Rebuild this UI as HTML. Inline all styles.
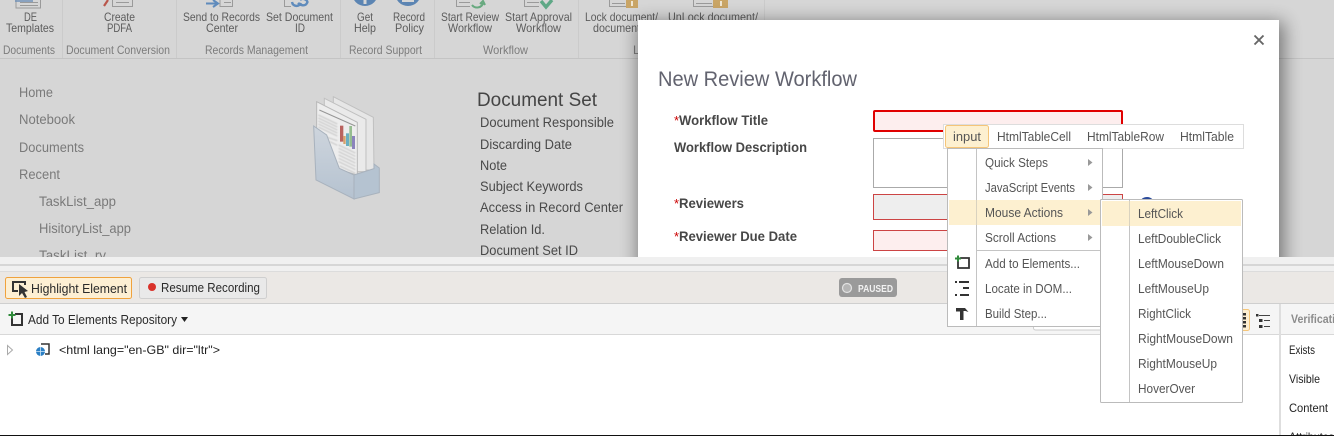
<!DOCTYPE html>
<html lang="en">
<head>
<meta charset="utf-8">
<title>New Review Workflow</title>
<style>
html,body{margin:0;padding:0;background:#fff;width:1341px;height:440px;overflow:hidden}
svg{display:block}
text{font-family:"Liberation Sans",Arial,sans-serif;white-space:pre}
.r{font-size:12px;fill:#5c5c5c}
.g{font-size:12px;fill:#7c7c7c}
.n{font-size:13.5px;fill:#7a7a7a}
.d{font-size:14px;fill:#4a4a4a}
.l{font-size:14px;font-weight:bold;fill:#474747}
.s{font-size:13px;fill:#c00}
.m{font-size:13px;fill:#555}
.b{font-size:13px;fill:#2a2a2a}
</style>
</head>
<body>
<svg width="1341" height="440" viewBox="0 0 1341 440" xmlns="http://www.w3.org/2000/svg">
<defs>
<filter id="sh" x="-20%" y="-30%" width="140%" height="160%"><feGaussianBlur stdDeviation="9"/></filter>
<filter id="bl" x="-2%" y="-2%" width="104%" height="104%"><feGaussianBlur stdDeviation="0.3"/></filter>
<filter id="bf" x="-5%" y="-5%" width="110%" height="110%"><feGaussianBlur stdDeviation="1.400"/></filter>
<linearGradient id="bx" x1="0" y1="0" x2="0" y2="1"><stop offset="0" stop-color="#ced5dd"/><stop offset="1" stop-color="#b5c2d0"/></linearGradient>
</defs>
<rect width="1341" height="440" fill="#fff"/>
<rect width="1334" height="258" fill="#d6d6d6"/>

<g filter="url(#bl)">
<!-- ribbon -->
<rect x="0" y="58" width="1334" height="1" fill="#c4c4c4"/>
<g fill="#cbcbcb">
<rect x="62" y="0" width="1" height="58"/><rect x="176" y="0" width="1" height="58"/><rect x="340" y="0" width="1" height="58"/><rect x="434" y="0" width="1" height="58"/><rect x="578" y="0" width="1" height="58"/><rect x="764" y="0" width="1" height="20"/>
</g>
<!-- ribbon icons -->
<g fill="none" stroke="#9a9a9a" stroke-width="1">
<path d="M16 -1V8H40.500V-1"/><path d="M112.500 -1V6.500H132.500V-1"/><path d="M220 -1V6.500H232.500V-1"/><path d="M284.500 -1V6.500H291"/><path d="M456.500 -1V6.500H470"/><path d="M524.500 -1V6.500H539"/><path d="M609.500 -1V6.500H626"/><path d="M693.500 -1V6.500H713"/>
<path d="M20 2.500H38M20 5.500H38M116 2.500H129M224 2.500H231M459 2.500H470M527 2.500H539M612 3.500H625M696 3.500H712"/>
</g>
<path d="M15 1H33" stroke="#6f92b8" stroke-width="1.400"/>
<path d="M104 6L108 0" stroke="#b9574c" stroke-width="2.200"/>
<path d="M206 3.500H217M213 0L218 3.500L213 7" fill="none" stroke="#5e8bbc" stroke-width="2"/>
<path d="M292 2C293 7 299 7 301 3M300 0C303 -3 309 1 307 3C305 7 300 5 298 3" fill="none" stroke="#5e8bbc" stroke-width="2.400"/>
<circle cx="365" cy="-7" r="13" fill="#5b85b3"/>
<rect x="363.500" y="-2" width="3" height="6" fill="#d6d6d6"/>
<circle cx="408" cy="-7" r="13" fill="#5b85b3"/>
<rect x="402" y="-3" width="12" height="5" fill="#d6d6d6"/>
<path d="M472 5C475 9 482 8 483 3M480 4L483 1L485 5" fill="none" stroke="#67a97f" stroke-width="2"/>
<path d="M541 1L546 7L552 0" fill="none" stroke="#5fa886" stroke-width="3.400"/>
<rect x="626" y="-2" width="12" height="10" fill="#c9a566"/><rect x="631" y="1" width="2" height="5" fill="#efe6d2"/>
<rect x="713" y="-2" width="15" height="10" fill="#c9a566"/><rect x="720" y="1" width="2" height="5" fill="#efe6d2"/>

<g class="r">
<text class="r" x="24" y="21" textLength="13" lengthAdjust="spacingAndGlyphs">DE</text>
<text class="r" x="6" y="32" textLength="48" lengthAdjust="spacingAndGlyphs">Templates</text>
<text class="r" x="104" y="21" textLength="31" lengthAdjust="spacingAndGlyphs">Create</text>
<text class="r" x="107" y="32" textLength="25" lengthAdjust="spacingAndGlyphs">PDFA</text>
<text class="r" x="183" y="21" textLength="77" lengthAdjust="spacingAndGlyphs">Send to Records</text>
<text class="r" x="206" y="32" textLength="32" lengthAdjust="spacingAndGlyphs">Center</text>
<text class="r" x="266" y="21" textLength="67" lengthAdjust="spacingAndGlyphs">Set Document</text>
<text class="r" x="295" y="32" textLength="10" lengthAdjust="spacingAndGlyphs">ID</text>
<text class="r" x="357" y="21" textLength="16" lengthAdjust="spacingAndGlyphs">Get</text>
<text class="r" x="354" y="32" textLength="22" lengthAdjust="spacingAndGlyphs">Help</text>
<text class="r" x="393" y="21" textLength="32" lengthAdjust="spacingAndGlyphs">Record</text>
<text class="r" x="395" y="32" textLength="29" lengthAdjust="spacingAndGlyphs">Policy</text>
<text class="r" x="441" y="21" textLength="58" lengthAdjust="spacingAndGlyphs">Start Review</text>
<text class="r" x="448" y="32" textLength="44" lengthAdjust="spacingAndGlyphs">Workflow</text>
<text class="r" x="505" y="21" textLength="67" lengthAdjust="spacingAndGlyphs">Start Approval</text>
<text class="r" x="516" y="32" textLength="45" lengthAdjust="spacingAndGlyphs">Workflow</text>
<text class="r" x="585" y="21" textLength="73" lengthAdjust="spacingAndGlyphs">Lock document/</text>
<text class="r" x="593" y="32" textLength="47" lengthAdjust="spacingAndGlyphs">document</text>
<text class="r" x="668" y="21" textLength="90" lengthAdjust="spacingAndGlyphs">UnLock document/</text>
<text class="g" x="3" y="54" textLength="52" lengthAdjust="spacingAndGlyphs">Documents</text>
<text class="g" x="66" y="54" textLength="104" lengthAdjust="spacingAndGlyphs">Document Conversion</text>
<text class="g" x="205" y="54" textLength="103" lengthAdjust="spacingAndGlyphs">Records Management</text>
<text class="g" x="349" y="54" textLength="73" lengthAdjust="spacingAndGlyphs">Record Support</text>
<text class="g" x="483" y="54" textLength="45" lengthAdjust="spacingAndGlyphs">Workflow</text>
<text class="g" x="633" y="54">L</text>
</g>

<!-- left nav -->
<text class="n" x="19" y="97" textLength="34" lengthAdjust="spacingAndGlyphs">Home</text>
<text class="n" x="19" y="124" textLength="56" lengthAdjust="spacingAndGlyphs">Notebook</text>
<text class="n" x="19" y="152" textLength="65" lengthAdjust="spacingAndGlyphs">Documents</text>
<text class="n" x="19" y="179" textLength="41" lengthAdjust="spacingAndGlyphs">Recent</text>
<text class="n" x="39" y="206" textLength="77" lengthAdjust="spacingAndGlyphs">TaskList_app</text>
<text class="n" x="39" y="233" textLength="92" lengthAdjust="spacingAndGlyphs">HisitoryList_app</text>
<text class="n" x="39" y="260" textLength="67" lengthAdjust="spacingAndGlyphs">TaskList_ry</text>

<!-- folder icon -->
<g transform="translate(280,80) scale(.3333)">
<polygon points="160,50 280,112 282,270 160,270" fill="#e6e6e6" stroke="#c0c0c0" stroke-width="3"/>
<polygon points="133,55 258,118 258,275 133,275" fill="#eaeaea" stroke="#c0c0c0" stroke-width="3"/>
<polygon points="110,65 232,127 232,285 165,265 110,200" fill="#ededed" stroke="#b8b8b8" stroke-width="3"/>
<path d="M118 90L226 138" stroke="#969696" stroke-width="3"/>
<g filter="url(#bf)" stroke="#cfcfcf" stroke-width="4" fill="none">
<path d="M115 105L172 132M115 114L172 141M115 123L172 150M115 132L172 159M115 141L172 168M135 170L172 182M150 185L172 196"/>
<path d="M176 195L226 219M176 205L226 229M176 215L226 239M176 225L226 249M176 235L226 259M176 245L226 269M180 258L226 280"/>
</g>
<rect x="180" y="137" width="10" height="48" fill="#b9625f"/>
<rect x="190" y="168" width="7" height="24" fill="#d6a26a"/>
<rect x="198" y="160" width="9" height="38" fill="#6aaec0"/>
<rect x="208" y="138" width="8" height="62" fill="#95bd90"/>
<rect x="216" y="168" width="9" height="39" fill="#8b84bd"/>
<polygon points="101,138 140,165 178,265 222,285 222,357 108,300" fill="url(#bx)" stroke="#a8b2bd" stroke-width="3"/>
<polygon points="222,285 282,266 282,252 298,264 298,338 222,357" fill="#b5c3d1" stroke="#a8b2bd" stroke-width="3"/>
</g>

<!-- document set -->
<text x="477" y="106" font-size="19" fill="#444" textLength="120" lengthAdjust="spacingAndGlyphs">Document Set</text>
<text class="d" x="480" y="127" textLength="134" lengthAdjust="spacingAndGlyphs">Document Responsible</text>
<text class="d" x="480" y="149" textLength="92" lengthAdjust="spacingAndGlyphs">Discarding Date</text>
<text class="d" x="480" y="170" textLength="27" lengthAdjust="spacingAndGlyphs">Note</text>
<text class="d" x="480" y="191" textLength="103" lengthAdjust="spacingAndGlyphs">Subject Keywords</text>
<text class="d" x="480" y="212" textLength="143" lengthAdjust="spacingAndGlyphs">Access in Record Center</text>
<text class="d" x="480" y="234" textLength="65" lengthAdjust="spacingAndGlyphs">Relation Id.</text>
<text class="d" x="480" y="255" textLength="98" lengthAdjust="spacingAndGlyphs">Document Set ID</text>
</g>

<!-- dialog -->
<rect x="638" y="22" width="646" height="270" fill="#000" opacity=".45" filter="url(#sh)"/>
<rect x="638" y="20" width="641" height="240" fill="#fff"/>
<path d="M1254.500 35.500L1263.500 44.500M1263.500 35.500L1254.500 44.500" stroke="#666" stroke-width="1.900" fill="none"/>
<text x="658" y="86" font-size="21" fill="#62636f" textLength="199" lengthAdjust="spacingAndGlyphs">New Review Workflow</text>

<text class="s" x="674" y="125">*</text>
<text class="l" x="679" y="125" textLength="89" lengthAdjust="spacingAndGlyphs">Workflow Title</text>
<text class="l" x="674" y="152" textLength="133" lengthAdjust="spacingAndGlyphs">Workflow Description</text>
<text class="s" x="674" y="208">*</text>
<text class="l" x="679" y="208" textLength="65" lengthAdjust="spacingAndGlyphs">Reviewers</text>
<text class="s" x="674" y="241">*</text>
<text class="l" x="679" y="241" textLength="118" lengthAdjust="spacingAndGlyphs">Reviewer Due Date</text>

<rect x="874" y="111" width="248" height="20" fill="#fdeeee" stroke="#e00000" stroke-width="2" rx="1"/>
<rect x="873.500" y="138.500" width="249" height="49" fill="#fff" stroke="#aaa"/>
<rect x="873.500" y="194.500" width="249" height="25" fill="#eee" stroke="#c44"/>
<rect x="873.500" y="230.500" width="249" height="20" fill="#fdeeee" stroke="#c44"/>
<circle cx="1147" cy="205" r="8" fill="#2a4a9a"/>

<!-- bottom panel -->
<rect x="0" y="257" width="1334" height="178" fill="#fff"/>
<rect x="0" y="257" width="1334" height="7" fill="#f0f0f0"/>
<rect x="0" y="264" width="1334" height="2" fill="#d6d6d6"/>
<rect x="0" y="266" width="1334" height="5" fill="#f0f0f0"/>
<rect x="0" y="271" width="1334" height="1" fill="#dcdcdc"/>
<rect x="0" y="272" width="1334" height="31" fill="#ebe8e5"/>
<rect x="0" y="303" width="1334" height="1" fill="#cfcfcf"/>
<rect x="0" y="304" width="1334" height="30" fill="#f5f5f5"/>
<rect x="0" y="334" width="1334" height="1" fill="#d8d8d8"/>

<!-- toolbar buttons -->
<rect x="5.500" y="277.500" width="126" height="21" rx="2" fill="#fdefd3" stroke="#f0a23c"/>
<path d="M13 289V282H25V285M13 289V291H18" fill="none" stroke="#333" stroke-width="2"/>
<path d="M19 284L19 296L22 293L25 298L27 297L24.500 292L28 291Z" fill="#333"/>
<text x="31" y="293" font-size="13" fill="#2a2a2a" textLength="96" lengthAdjust="spacingAndGlyphs">Highlight Element</text>
<rect x="139.500" y="277.500" width="127" height="21" rx="2" fill="#e9e9e9" stroke="#cfcfcf"/>
<circle cx="152" cy="287" r="4" fill="#d9322a"/>
<text x="161" y="292" font-size="13" fill="#2a2a2a" textLength="99" lengthAdjust="spacingAndGlyphs">Resume Recording</text>

<rect x="839" y="278" width="58" height="19" rx="3" fill="#9a9a9a"/>
<circle cx="847" cy="288" r="4.500" fill="#b5b5b5" stroke="#e2e2e2" stroke-width="1.200"/>
<text x="858" y="292" font-size="10.500" font-weight="bold" fill="#f2f2f2" textLength="35" lengthAdjust="spacingAndGlyphs">PAUSED</text>

<!-- add to repo -->
<path d="M15 314H22V325H12V318" fill="none" stroke="#333" stroke-width="2"/>
<path d="M12 311.500V318.500M8.500 315H15.500" stroke="#2f8a3a" stroke-width="2"/>
<text class="b" x="28" y="324" textLength="149" lengthAdjust="spacingAndGlyphs">Add To Elements Repository</text>
<polygon points="181,317 188,317 184.500,322" fill="#222"/>

<!-- tree -->
<polygon points="7.500,345.500 12.500,350 7.500,354.500" fill="#fff" stroke="#aaa"/>
<path d="M41 344H49V354H45" fill="none" stroke="#333" stroke-width="1.500"/>
<circle cx="40.500" cy="351.500" r="4.500" fill="#2b7fc4"/>
<path d="M36 351.500H45M40.500 347V356" stroke="#cfe6f7" stroke-width=".8"/>
<text x="59" y="354" font-size="12" fill="#222" textLength="161" lengthAdjust="spacingAndGlyphs">&lt;html lang="en-GB" dir="ltr"&gt;</text>

<!-- right-hand -->
<rect x="1033.500" y="310.500" width="90" height="19.500" rx="2" fill="#fff" stroke="#ccc"/>
<rect x="1232.500" y="309.500" width="17" height="21" rx="2" fill="#fdefd3" stroke="#f5c578"/>
<g fill="#333"><rect x="1243" y="313" width="3" height="2.500"/><rect x="1243" y="317" width="3" height="2.500"/><rect x="1243" y="321" width="3" height="2.500"/><rect x="1243" y="325" width="3" height="2.500"/></g>
<g fill="#333"><rect x="1256" y="314" width="2.500" height="2.500"/><rect x="1259" y="319" width="3.500" height="3"/><rect x="1259" y="325" width="3.500" height="3"/></g>
<path d="M1259 315.500H1270M1264 320.500H1270M1264 326.500H1270" stroke="#444" stroke-width="1"/>
<rect x="1279" y="304" width="2" height="131" fill="#dedede"/>
<text x="1291" y="323" font-size="12" font-weight="bold" fill="#8c8c8c" textLength="57" lengthAdjust="spacingAndGlyphs">Verification</text>
<text x="1289" y="354" font-size="12" fill="#222" textLength="26" lengthAdjust="spacingAndGlyphs">Exists</text>
<text x="1289" y="383" font-size="12" fill="#222" textLength="31" lengthAdjust="spacingAndGlyphs">Visible</text>
<text x="1289" y="412" font-size="12" fill="#222" textLength="39" lengthAdjust="spacingAndGlyphs">Content</text>
<text x="1289" y="441" font-size="12" fill="#222" textLength="45" lengthAdjust="spacingAndGlyphs">Attributes</text>

<!-- mask + black line -->
<rect x="0" y="436" width="1341" height="4" fill="#fff"/>
<rect x="0" y="435" width="1334" height="1" fill="#111"/>
<rect x="1334" y="0" width="7" height="440" fill="#fff"/>

<!-- context bar -->
<rect x="943.500" y="124.500" width="300" height="24" fill="#fff" stroke="#ddd"/>
<rect x="945.500" y="125.500" width="43" height="22" rx="2" fill="#fdf0d0" stroke="#f5c578"/>
<text class="m" x="953" y="141" textLength="28" lengthAdjust="spacingAndGlyphs">input</text>
<text class="m" x="997" y="141" textLength="74" lengthAdjust="spacingAndGlyphs">HtmlTableCell</text>
<text class="m" x="1087" y="141" textLength="77" lengthAdjust="spacingAndGlyphs">HtmlTableRow</text>
<text class="m" x="1180" y="141" textLength="54" lengthAdjust="spacingAndGlyphs">HtmlTable</text>

<!-- main menu -->
<rect x="947.500" y="148.500" width="155" height="178" fill="#fff" stroke="#bbb"/>
<rect x="976" y="149" width="1" height="177" fill="#c4c4c4"/>
<rect x="949" y="200" width="152" height="25" fill="#fdf0d0"/>
<rect x="976" y="200" width="1" height="25" fill="#d9d2bf"/>
<rect x="977" y="250" width="125" height="1" fill="#c4c4c4"/>
<text class="m" x="985" y="167" textLength="63" lengthAdjust="spacingAndGlyphs">Quick Steps</text>
<text class="m" x="985" y="192" textLength="90" lengthAdjust="spacingAndGlyphs">JavaScript Events</text>
<text class="m" x="985" y="217" textLength="78" lengthAdjust="spacingAndGlyphs">Mouse Actions</text>
<text class="m" x="985" y="242" textLength="71" lengthAdjust="spacingAndGlyphs">Scroll Actions</text>
<text class="m" x="985" y="268" textLength="95" lengthAdjust="spacingAndGlyphs">Add to Elements...</text>
<text class="m" x="985" y="293" textLength="87" lengthAdjust="spacingAndGlyphs">Locate in DOM...</text>
<text class="m" x="985" y="318" textLength="62" lengthAdjust="spacingAndGlyphs">Build Step...</text>
<g fill="#999">
<polygon points="1088,159 1092.500,162.500 1088,166"/>
<polygon points="1088,184 1092.500,187.500 1088,191"/>
<polygon points="1088,209 1092.500,212.500 1088,216"/>
<polygon points="1088,234 1092.500,237.500 1088,241"/>
</g>
<!-- menu icons -->
<path d="M960 258H969V268H958V261" fill="none" stroke="#333" stroke-width="1.800"/>
<path d="M958 255.500V261.500M955 258.500H961" stroke="#2f8a3a" stroke-width="2"/>
<g fill="#333">
<rect x="955" y="281" width="2" height="2"/>
<rect x="959" y="281" width="10" height="2"/>
<rect x="963" y="287" width="6" height="2"/>
<rect x="955" y="294" width="2" height="2"/>
<rect x="960" y="294" width="9" height="2"/>
<path d="M956 308H965L968.500 312L965.500 311H963.500V320H960V311.500H956Z"/>
</g>

<!-- submenu -->
<rect x="1100.500" y="199.500" width="142" height="203" rx="1" fill="#fff" stroke="#bbb"/>
<rect x="1129" y="200" width="1" height="202" fill="#c4c4c4"/>
<rect x="1102" y="201" width="139" height="25" fill="#fdf0d0"/>
<rect x="1129" y="201" width="1" height="25" fill="#d9d2bf"/>
<text class="m" x="1138" y="218" textLength="45" lengthAdjust="spacingAndGlyphs">LeftClick</text>
<text class="m" x="1138" y="243" textLength="83" lengthAdjust="spacingAndGlyphs">LeftDoubleClick</text>
<text class="m" x="1138" y="268" textLength="86" lengthAdjust="spacingAndGlyphs">LeftMouseDown</text>
<text class="m" x="1138" y="293" textLength="71" lengthAdjust="spacingAndGlyphs">LeftMouseUp</text>
<text class="m" x="1138" y="318" textLength="53" lengthAdjust="spacingAndGlyphs">RightClick</text>
<text class="m" x="1138" y="343" textLength="95" lengthAdjust="spacingAndGlyphs">RightMouseDown</text>
<text class="m" x="1138" y="368" textLength="79" lengthAdjust="spacingAndGlyphs">RightMouseUp</text>
<text class="m" x="1138" y="393" textLength="57" lengthAdjust="spacingAndGlyphs">HoverOver</text>
</svg>
</body>
</html>
